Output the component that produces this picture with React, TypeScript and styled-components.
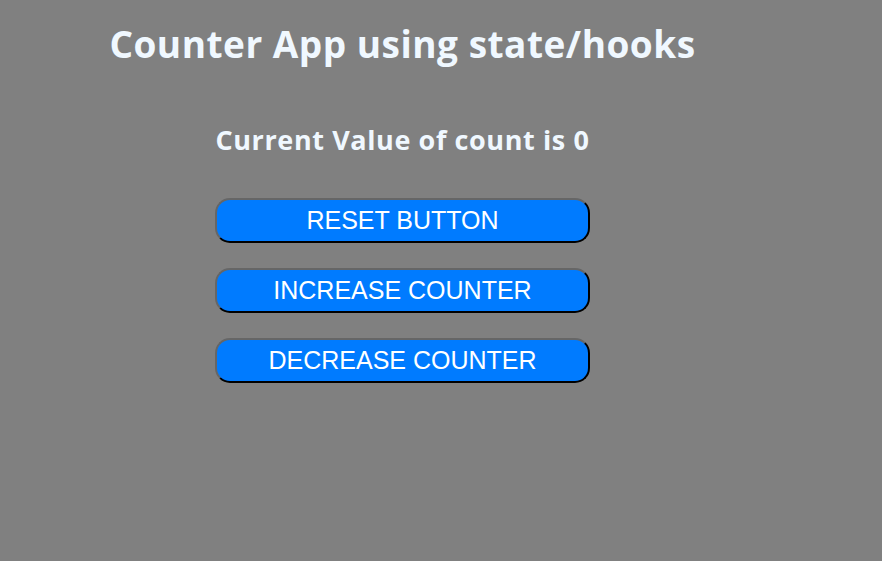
import { useState } from "react";
import styled, { createGlobalStyle } from "styled-components";

const GlobalStyle = createGlobalStyle`
  html, body {
    margin: 0;
    padding: 0;
    background-color: #808080;
  }
  body {
    font-family: "Open Sans", "Noto Sans", sans-serif;
    min-height: 561px;
  }
`;

const Page = styled.div`
  width: 805px;
  display: flex;
  flex-direction: column;
  align-items: center;
  padding-top: 18px;
`;

const Title = styled.h1`
  margin: 0;
  font-size: 37px;
  line-height: 52px;
  font-weight: 700;
  color: aliceblue;
  letter-spacing: 0.5px;
`;

const Panel = styled.div`
  width: 375px;
  margin-top: 53px;
  display: flex;
  flex-direction: column;
  gap: 25px;
`;

const CountText = styled.h2`
  margin: 0 0 16px;
  font-size: 27px;
  line-height: 34px;
  font-weight: 700;
  color: aliceblue;
  text-align: center;
  letter-spacing: 0.6px;
  white-space: nowrap;
`;

const Button = styled.button`
  width: 375px;
  height: 45px;
  padding: 0;
  background-color: #007bff;
  color: #fff;
  font-family: "Liberation Sans", Arial, sans-serif;
  font-size: 25px;
  border: 2px outset #555;
  border-color: #666 #111 #111 #666;
  border-radius: 15px;
  cursor: pointer;
`;

export default function App() {
  const [count, setCount] = useState(0);

  return (
    <>
      <GlobalStyle />
      <Page>
        <Title>Counter App using state/hooks</Title>
        <Panel>
          <CountText>Current Value of count is {count}</CountText>
          <Button onClick={() => setCount(0)}>RESET BUTTON</Button>
          <Button onClick={() => setCount(count + 1)}>INCREASE COUNTER</Button>
          <Button onClick={() => setCount(count - 1)}>DECREASE COUNTER</Button>
        </Panel>
      </Page>
    </>
  );
}
